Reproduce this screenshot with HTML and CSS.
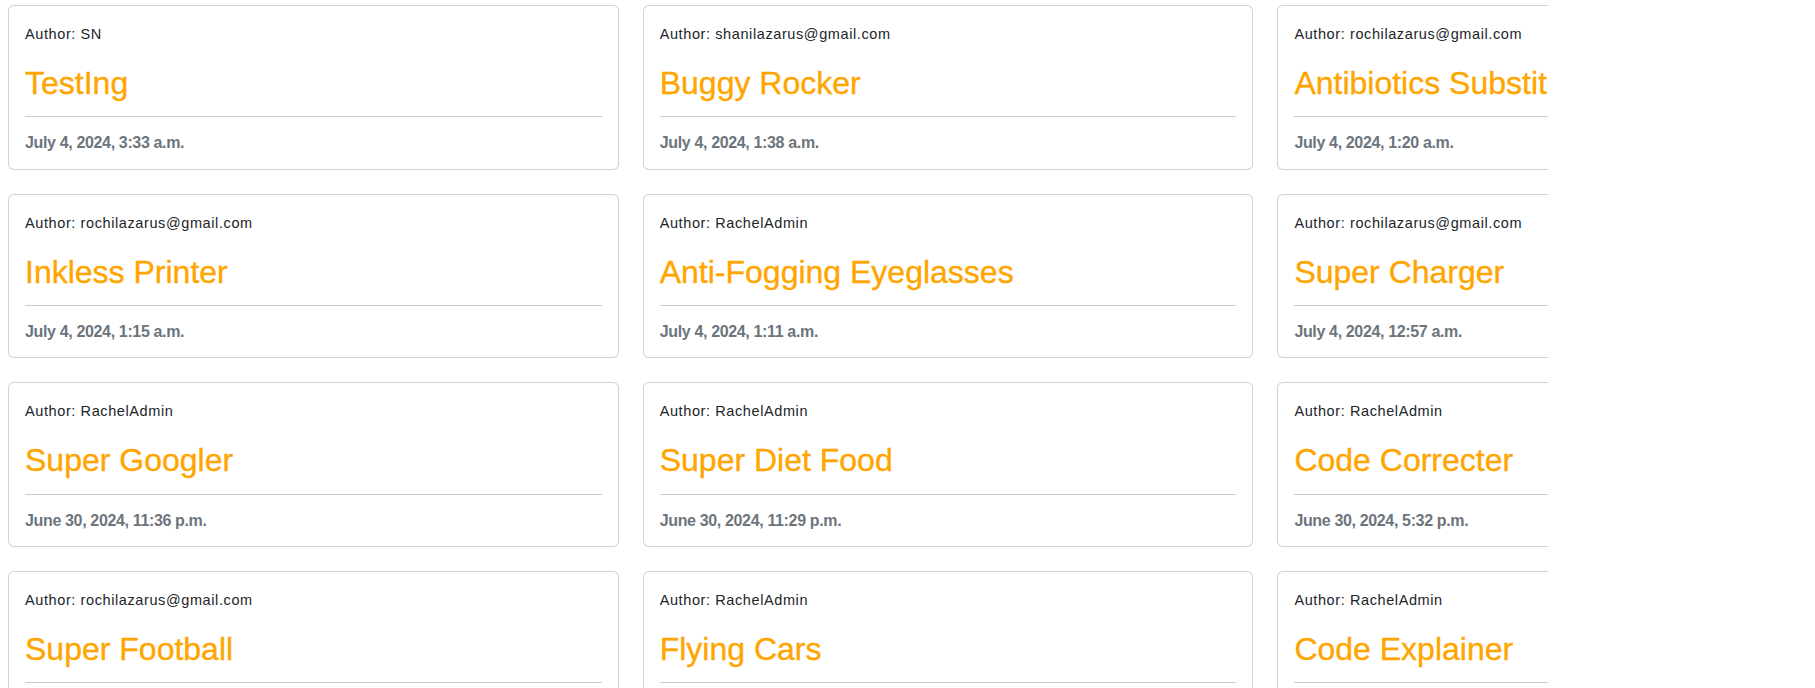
FILE: index.html
```html
<!DOCTYPE html>
<html lang="en">
<head>
<meta charset="utf-8">
<title>Ideas</title>
<link rel="stylesheet" href="styles.css">
</head>
<body>
<main class="viewport">
  <div class="grid">
    <article class="card"><p class="author">Author: SN</p><h2 class="title">TestIng</h2><hr class="rule"><h6 class="date">July 4, 2024, 3:33 a.m.</h6></article>
    <article class="card"><p class="author">Author: shanilazarus@gmail.com</p><h2 class="title">Buggy Rocker</h2><hr class="rule"><h6 class="date">July 4, 2024, 1:38 a.m.</h6></article>
    <article class="card"><p class="author">Author: rochilazarus@gmail.com</p><h2 class="title">Antibiotics Substitute</h2><hr class="rule"><h6 class="date">July 4, 2024, 1:20 a.m.</h6></article>

    <article class="card"><p class="author">Author: rochilazarus@gmail.com</p><h2 class="title">Inkless Printer</h2><hr class="rule"><h6 class="date">July 4, 2024, 1:15 a.m.</h6></article>
    <article class="card"><p class="author">Author: RachelAdmin</p><h2 class="title">Anti-Fogging Eyeglasses</h2><hr class="rule"><h6 class="date">July 4, 2024, 1:11 a.m.</h6></article>
    <article class="card"><p class="author">Author: rochilazarus@gmail.com</p><h2 class="title">Super Charger</h2><hr class="rule"><h6 class="date">July 4, 2024, 12:57 a.m.</h6></article>

    <article class="card"><p class="author">Author: RachelAdmin</p><h2 class="title">Super Googler</h2><hr class="rule"><h6 class="date">June 30, 2024, 11:36 p.m.</h6></article>
    <article class="card"><p class="author">Author: RachelAdmin</p><h2 class="title">Super Diet Food</h2><hr class="rule"><h6 class="date">June 30, 2024, 11:29 p.m.</h6></article>
    <article class="card"><p class="author">Author: RachelAdmin</p><h2 class="title">Code Correcter</h2><hr class="rule"><h6 class="date">June 30, 2024, 5:32 p.m.</h6></article>

    <article class="card"><p class="author">Author: rochilazarus@gmail.com</p><h2 class="title">Super Football</h2><hr class="rule"><h6 class="date">June 30, 2024, 5:20 p.m.</h6></article>
    <article class="card"><p class="author">Author: RachelAdmin</p><h2 class="title">Flying Cars</h2><hr class="rule"><h6 class="date">June 30, 2024, 5:11 p.m.</h6></article>
    <article class="card"><p class="author">Author: RachelAdmin</p><h2 class="title">Code Explainer</h2><hr class="rule"><h6 class="date">June 30, 2024, 5:02 p.m.</h6></article>
  </div>
</main>
</body>
</html>
```
FILE: styles.css
```css
html, body {
  margin: 0;
  padding: 0;
  background: #ffffff;
  overflow: hidden;
}

body {
  font-family: "Liberation Sans", Arial, sans-serif;
  color: #212529;
}

.viewport {
  width: 1548px;
  overflow: hidden;
}

.grid {
  display: grid;
  grid-template-columns: repeat(3, 610.7px);
  column-gap: 24px;
  row-gap: 24px;
  padding: 5px 0 0 8px;
}

.card {
  border: 1px solid rgba(0, 0, 0, 0.175);
  border-radius: 6px;
  padding: 16px;
  background: #ffffff;
  min-width: 0;
}

.author {
  margin: 0 0 16px;
  font-size: 14.5px;
  line-height: 24px;
  letter-spacing: 0.6px;
  color: #212529;
  white-space: nowrap;
}

.title {
  margin: 0;
  padding-top: 2px;
  font-size: 32px;
  line-height: 38.4px;
  font-weight: 400;
  color: #ffa500;
  -webkit-text-stroke: 0.35px #ffa500;
  white-space: nowrap;
}

.rule {
  margin: 14px 0 15px;
  border: 0;
  border-top: 1px solid #c8c9ca;
  height: 0;
}

.date {
  margin: 0;
  padding-top: 1px;
  font-size: 16px;
  line-height: 19.2px;
  font-weight: 700;
  letter-spacing: -0.35px;
  color: #6c757d;
  white-space: nowrap;
}
```
